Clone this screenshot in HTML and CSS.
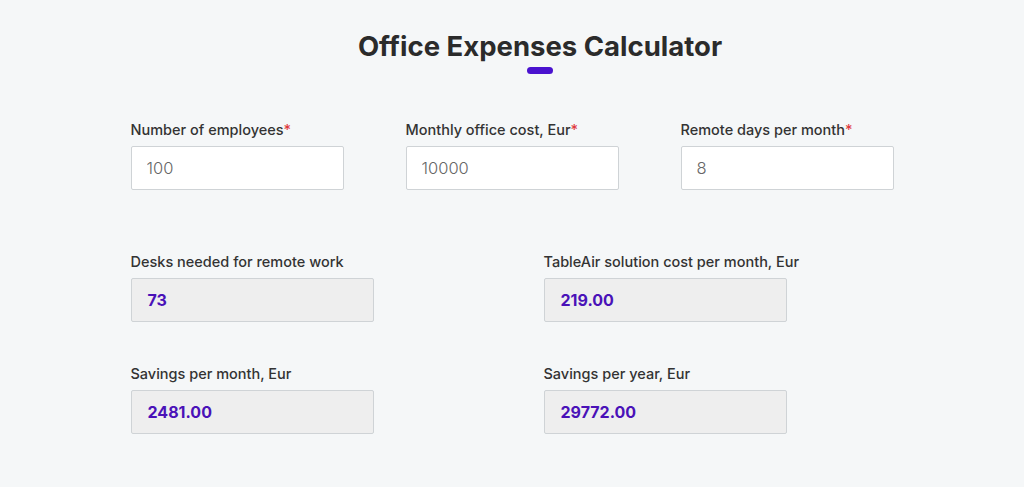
FILE: index.html
```html
<!DOCTYPE html>
<html lang="en">
<head>
  <meta charset="UTF-8">
  <meta name="viewport" content="width=device-width, initial-scale=1.0">
  <title>Office Expenses Calculator</title>
  <link rel="stylesheet" href="styles.css">
</head>
<body>

  <div id="calculator">
    <div class="heading">
      <h1>Office Expenses Calculator</h1>
      <div class="title-bar"></div>
    </div>

    <div class="input-row">
      <div class="field">
        <label for="employees">Number of employees<span class="req">*</span></label>
        <input type="text" id="employees" value="100">
      </div>
      <div class="field">
        <label for="officeCost">Monthly office cost, Eur<span class="req">*</span></label>
        <input type="text" id="officeCost" value="10000">
      </div>
      <div class="field">
        <label for="remoteDays">Remote days per month<span class="req">*</span></label>
        <input type="text" id="remoteDays" value="8">
      </div>
    </div>

    <div class="result-row">
      <div class="field">
        <label>Desks needed for remote work</label>
        <div class="result" id="desks">73</div>
      </div>
      <div class="field">
        <label>TableAir solution cost per month, Eur</label>
        <div class="result" id="solutionCost">219.00</div>
      </div>
    </div>

    <div class="result-row second">
      <div class="field">
        <label>Savings per month, Eur</label>
        <div class="result" id="monthSavings">2481.00</div>
      </div>
      <div class="field">
        <label>Savings per year, Eur</label>
        <div class="result" id="yearSavings">29772.00</div>
      </div>
    </div>
  </div>

</body>
</html>
```

FILE: styles.css
```css
body {
  font-family: Inter, "Open Sans", sans-serif;
  margin: 0;
  background-color: #f5f7f8;
  color: #333;
}
#calculator {
  width: 763px;
  margin: 0 auto;
  padding-top: 29px;
}
.heading {
  padding-left: 56px;
}
h1 {
  margin: 0;
  font-size: 27.5px;
  line-height: 34px;
  font-weight: 700;
  text-align: center;
  color: #2b2b2b;
  white-space: nowrap;
}
.title-bar {
  width: 26px;
  height: 7px;
  border-radius: 4px;
  background-color: #4a12cf;
  margin: 4px auto 0;
}
.input-row {
  display: grid;
  grid-template-columns: repeat(3, 213px);
  column-gap: 62px;
  margin-top: 47px;
}
.result-row {
  display: grid;
  grid-template-columns: 243px 243px;
  column-gap: 170px;
  margin-top: 63px;
}
.result-row.second {
  margin-top: 43px;
}
.field label {
  display: block;
  font-size: 14.5px;
  line-height: 18px;
  font-weight: 500;
  color: #333;
  margin-bottom: 7px;
  white-space: nowrap;
}
.req {
  color: #e0393e;
}
.field input {
  box-sizing: border-box;
  width: 100%;
  height: 44px;
  padding: 0 15px;
  border: 1px solid #cfd3d6;
  border-radius: 2px;
  background-color: #fff;
  font-family: inherit;
  font-size: 16.5px;
  font-weight: 300;
  color: #666;
}
.result {
  box-sizing: border-box;
  height: 44px;
  padding: 0 16px;
  display: flex;
  align-items: center;
  border: 1px solid #cfd3d6;
  border-radius: 2px;
  background-color: #eeeeee;
  font-size: 16px;
  font-weight: 700;
  color: #4a12b8;
}
```
